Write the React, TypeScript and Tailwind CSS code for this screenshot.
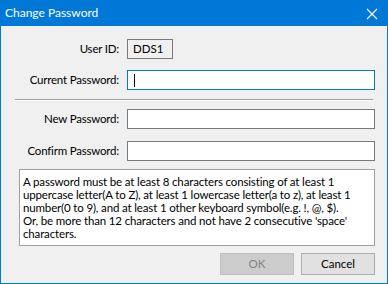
import React from "react";

const font = { fontFamily: 'Lato, "Noto Sans", sans-serif' };

function Row({ label, children, className }: { label: string; children: React.ReactNode; className?: string }) {
  return (
    <div className={"flex items-center h-[20px] " + (className || "")}>
      <div className="w-[118px] text-right text-[11.5px] tracking-[-0.2px] text-black leading-[20px]">{label}</div>
      <div className="ml-[8px] flex">{children}</div>
    </div>
  );
}

const lines = [
  "A password must be at least 8 characters consisting of at least 1",
  "uppercase letter(A to Z), at least 1 lowercase letter(a to z), at least 1",
  "number(0 to 9), and at least 1 other keyboard symbol(e.g. !, @, $).",
  "Or, be more than 12 characters and not have 2 consecutive 'space'",
  "characters.",
];

export default function App() {
  return (
    <div className="w-[388px] h-[284px] bg-[#0078d7] p-[1px] pt-0 flex flex-col" style={font}>
      <div className="h-[26px] flex items-center justify-between pl-[4px] pr-[9px] text-white text-[12px]">
        <span>Change Password</span>
        <svg width="12" height="12" viewBox="0 0 12 12" className="mt-[1px]">
          <path d="M1 1 L11 11 M11 1 L1 11" stroke="white" strokeWidth="1.1" fill="none" />
        </svg>
      </div>
      <div className="flex-1 bg-[#f0f0f0] flex flex-col">
        <Row label="User ID:" className="mt-[13px]">
          <div className="w-[46px] h-[20px] border border-[#7a7a7a] text-[11.5px] leading-[18px] pl-[5px] text-black">DDS1</div>
        </Row>
        <Row label="Current Password:" className="mt-[11px]">
          <div className="w-[248px] h-[20px] border border-[#0078d7] bg-white flex items-center pl-[6px]">
            <div className="w-[1px] h-[13px] bg-black" />
          </div>
        </Row>
        <div className="mt-[9px] ml-[14px] w-[358px] h-[2px] border-t border-[#a0a0a0] border-b border-b-white" />
        <Row label="New Password:" className="mt-[8px]">
          <div className="w-[248px] h-[20px] border border-[#7a7a7a] bg-white" />
        </Row>
        <Row label="Confirm Password:" className="mt-[12px]">
          <div className="w-[248px] h-[20px] border border-[#7a7a7a] bg-white" />
        </Row>
        <div className="mt-[8px] ml-[18px] w-[356px] h-[77px] border border-[#a0a0a0] bg-white pl-[3px] pt-[5px] text-[11.5px] tracking-[-0.15px] leading-[13px] text-black overflow-hidden">
          {lines.map((l) => (
            <div key={l} className="whitespace-nowrap">{l}</div>
          ))}
        </div>
        <div className="mt-[7px] flex justify-end gap-[7px] pr-[12px]">
          <div className="w-[74px] h-[22px] border border-[#bfbfbf] bg-[#cccccc] text-[#838383] text-[11.5px] flex items-center justify-center">OK</div>
          <div className="w-[74px] h-[22px] border border-[#adadad] bg-[#e1e1e1] text-black text-[11.5px] flex items-center justify-center">Cancel</div>
        </div>
      </div>
    </div>
  );
}
